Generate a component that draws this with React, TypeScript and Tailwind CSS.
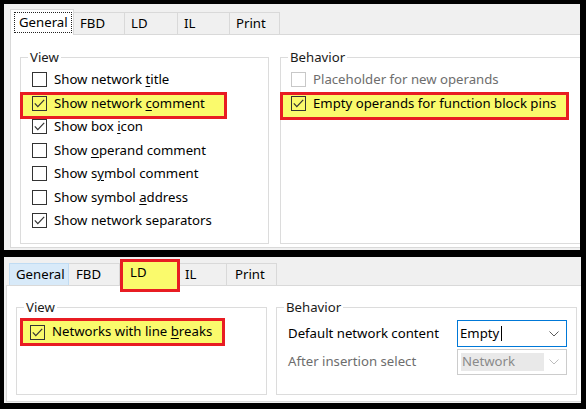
import React from "react";

// two stacked screenshots of a Windows options dialog, on a black frame

type Row = { label: React.ReactNode; checked?: boolean; disabled?: boolean; mark?: string };

function Box({ checked, disabled }: { checked?: boolean; disabled?: boolean }) {
  return (
    <span
      className={`relative flex h-[15px] w-[15px] shrink-0 items-center justify-center border ${
        disabled ? "border-[#c8c8c8]" : "border-[#333333]"
      }`}
    >
      {checked && (
        <svg width="13" height="13" viewBox="0 0 13 13">
          <path d="M1.8 6.4 L4.8 9.6 L11.2 2.8" fill="none" stroke="#333333" strokeWidth="1.2" />
        </svg>
      )}
    </span>
  );
}

// red/yellow highlight painted over the screenshot
function Mark({ className }: { className: string }) {
  return <span className={`absolute border-[3px] border-[#e81c23] bg-[#fafa6c] ${className}`} />;
}

function CheckRow({ row, h }: { row: Row; h: string }) {
  return (
    <div className={`relative flex items-center gap-[7px] ${h}`}>
      {row.mark && <Mark className={row.mark} />}
      <Box checked={row.checked} disabled={row.disabled} />
      <span className={`relative whitespace-nowrap ${row.disabled ? "text-[#6d6d6d]" : "text-black"}`}>{row.label}</span>
    </div>
  );
}

function Group({ title, className, children }: { title: string; className: string; children?: React.ReactNode }) {
  return (
    <div className={`relative border border-[#dcdcdc] ${className}`}>
      <span className="absolute -top-[10px] left-[7px] bg-white px-[2px] leading-[18px] text-[#1a1a1a]">{title}</span>
      {children}
    </div>
  );
}

function Chevron({ color }: { color: string }) {
  return (
    <svg width="10" height="6" viewBox="0 0 10 6">
      <path d="M0.5 0.5 L5 5 L9.5 0.5" fill="none" stroke={color} strokeWidth="1" />
    </svg>
  );
}

const U = ({ children }: { children: React.ReactNode }) => (
  <span className="underline decoration-1 underline-offset-[2px]">{children}</span>
);

const viewRows: Row[] = [
  { label: <>Show network <U>t</U>itle</> },
  { label: <>Show network <U>c</U>omment</>, checked: true, mark: "-left-[12px] top-0 h-[27px] w-[207px]" },
  { label: <>Show box <U>i</U>con</>, checked: true },
  { label: <>Show <U>o</U>perand comment</> },
  { label: <>Show s<U>y</U>mbol comment</> },
  { label: <>Show symbol <U>a</U>ddress</> },
  { label: <>Show network separators</>, checked: true },
];

const behaviorRows: Row[] = [
  { label: "Placeholder for new operands", disabled: true },
  { label: "Empty operands for function block pins", checked: true, mark: "-left-[11px] top-0 h-[28px] w-[289px]" },
];

function TopShot() {
  const tabs = [
    { t: "FBD", w: "w-[51px]" },
    { t: "LD", w: "w-[53px]" },
    { t: "IL", w: "w-[52px]" },
    { t: "Print", w: "w-[50px]" },
  ];
  return (
    <div className="flex h-[246px] w-[576px] flex-col overflow-hidden bg-[#f0f0f0]">
      <div className="flex h-[30px] shrink-0 items-end pl-[6px]">
        <div className="relative z-10 -mb-px flex h-[26px] w-[64px] items-start border border-b-0 border-[#d9d9d9] bg-white pl-[3px] pr-[1px] pt-[2px]">
          <span className="flex h-[21px] flex-1 items-center border border-dotted border-[#222] pl-[4px]">General</span>
        </div>
        {tabs.map((tab) => (
          <div key={tab.t} className={`flex h-[22px] items-center border-r border-t border-[#d9d9d9] pl-[6px] ${tab.w}`}>
            {tab.t}
          </div>
        ))}
      </div>
      <div className="mb-[2px] ml-[6px] flex w-[600px] flex-1 gap-[11px] border border-[#d9d9d9] bg-white pb-[3px] pl-[9px] pt-[22px]">
        <Group title="View" className="w-[249px] pl-[11px] pt-[10px]">
          {viewRows.map((r, i) => (
            <CheckRow key={i} row={r} h="h-[23.5px]" />
          ))}
        </Group>
        <Group title="Behavior" className="w-[320px] pl-[10px] pt-[10px]">
          {behaviorRows.map((r, i) => (
            <CheckRow key={i} row={r} h="h-[23.5px]" />
          ))}
        </Group>
      </div>
    </div>
  );
}

function BottomShot() {
  return (
    <div className="mt-[7px] flex h-[146px] w-[577px] flex-col overflow-hidden bg-[#f0f0f0]">
      <div className="relative z-10 flex h-[28px] shrink-0 items-end pl-[5px]">
        <div className="flex h-[22px] w-[60px] items-center border border-b-0 border-[#c0dcf3] bg-[#d8eaf9] pl-[6px]">General</div>
        <div className="flex h-[22px] w-[51px] items-center border-r border-t border-[#d9d9d9] pl-[7px]">FBD</div>
        <div className="relative flex h-[22px] w-[60px] items-center">
          <Mark className="-top-[4px] left-0 h-[33px] w-[60px]" />
          <span className="relative -mt-[2px] pl-[10px]">LD</span>
        </div>
        <div className="flex h-[22px] w-[47px] items-center border-r border-t border-[#d9d9d9] pl-[5px]">IL</div>
        <div className="flex h-[22px] w-[50px] items-center border-r border-t border-[#d9d9d9] pl-[8px]">Print</div>
      </div>
      <div className="mb-px ml-[2px] flex w-[600px] flex-1 gap-[9px] border border-[#d9d9d9] bg-white pb-[6px] pl-[9px] pt-[21px]">
        <Group title="View" className="w-[251px] pl-[13px] pt-[12px]">
          <CheckRow
            row={{
              label: <>Networks with line <U>b</U>reaks</>,
              checked: true,
              mark: "-left-[10px] -top-[2px] h-[28px] w-[205px]",
            }}
            h="h-[24px]"
          />
        </Group>
        <Group title="Behavior" className="w-[301px] pl-[11px] pt-[12px]">
          <div className="flex h-[27px] items-center">
            <span className="w-[169px]">Default network content</span>
            <div className="flex h-[27px] w-[110px] items-center justify-between border border-[#0078d7] bg-white pl-[2px] pr-[7px]">
              <span className="flex items-center">
                Empty<span className="ml-[2px] h-[15px] w-px bg-black" />
              </span>
              <Chevron color="#5a5a5a" />
            </div>
          </div>
          <div className="mt-[2px] flex h-[26px] items-center">
            <span className="w-[169px] text-[#6d6d6d]">After insertion select</span>
            <div className="flex h-[26px] w-[110px] items-center border border-[#cccccc] bg-white p-[3px] pr-[7px]">
              <span className="flex h-full w-[83px] items-center bg-[#e9e9e9] pl-[1px] text-[#8a8a8a]">Network</span>
              <span className="ml-auto">
                <Chevron color="#bdbdbd" />
              </span>
            </div>
          </div>
        </Group>
      </div>
    </div>
  );
}

export default function App() {
  return (
    <div className="h-[409px] w-[586px] overflow-hidden bg-black pl-[4px] pt-[4px] font-['Noto_Sans',sans-serif] text-[13.2px] leading-none text-black">
      <TopShot />
      <BottomShot />
    </div>
  );
}
